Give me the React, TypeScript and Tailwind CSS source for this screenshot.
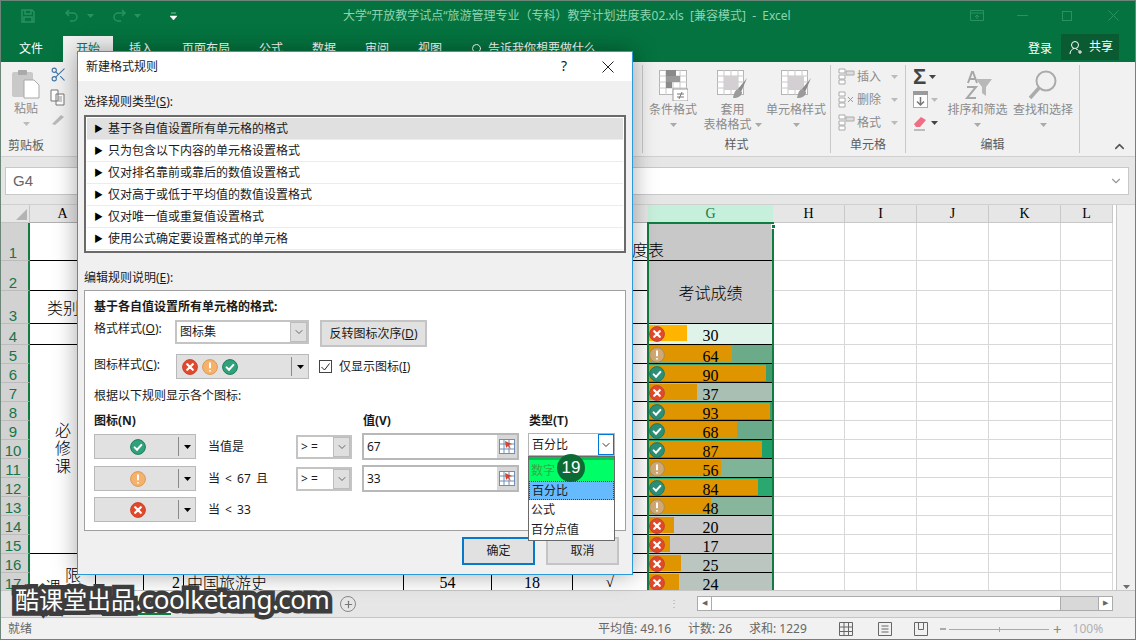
import React from "react";
import { Scissors, Search, ChevronUp, ChevronDown, Plus } from "lucide-react";

// status icons used in the dialog and in the G column
const StatusIcon = ({ kind, size = 16, dim = false }: { kind: "x" | "warn" | "ok"; size?: number; dim?: boolean }) => {
  const fill =
    kind === "x" ? "#e2492b" : kind === "warn" ? (dim ? "#cfa873" : "#f6b26b") : dim ? "#2c8f76" : "#2fa27c";
  const stroke = kind === "x" ? "#c9432a" : kind === "warn" ? (dim ? "#a88a5c" : "#d99a58") : "#1d7c60";
  return (
    <svg width={size} height={size} viewBox="0 0 16 16">
      <circle cx="8" cy="8" r="7.4" fill={fill} stroke={stroke} strokeWidth="1" />
      {kind === "x" && <path d="M5.2 5.2l5.6 5.6M10.8 5.2l-5.6 5.6" stroke="#fff" strokeWidth="2.2" strokeLinecap="round" />}
      {kind === "warn" && <path d="M8 3.6v5.6M8 11.2v1.2" stroke="#fff" strokeWidth="2" />}
      {kind === "ok" && <path d="M4.6 8.4l2.4 2.3 4.4-4.8" stroke="#fff" strokeWidth="2" fill="none" strokeLinecap="round" />}
    </svg>
  );
};

const Caret = ({ className = "" }: { className?: string }) => (
  <svg width="7" height="4" viewBox="0 0 7 4" className={className}>
    <path d="M0 0h7L3.5 4z" fill="currentColor" />
  </svg>
);

const RefIcon = () => (
  <svg width="16" height="15" viewBox="0 0 16 15">
    <rect x="0.5" y="0.5" width="15" height="14" fill="#fff" stroke="#6f8fb5" />
    <path d="M0 5h16M0 10h16M5 0v15M10 0v15" stroke="#6f8fb5" />
    <path d="M6 2l7 3-3 1 2 4-3-3-2 2z" fill="#d8442a" />
  </svg>
);

const ConditionIcon = () => (
  <svg width="29" height="31" viewBox="0 0 29 31">
    <rect x="0.5" y="0.5" width="27" height="24" fill="#fff" stroke="#b5b5b5" />
    <path d="M7 0v25M14 0v25M21 0v25M0 6h28M0 12h28M0 18h28" stroke="#c8c8c8" />
    <rect x="7" y="0" width="10" height="6" fill="#8a8a8a" />
    <rect x="7" y="6" width="14" height="6" fill="#9a9a9a" />
    <rect x="7" y="12" width="6" height="6" fill="#8a8a8a" />
    <rect x="14" y="19" width="15" height="12" fill="#fff" stroke="#9a9a9a" />
    <path d="M18 24h7M18 27h7M20 29l3-7" stroke="#777" />
  </svg>
);

const TableStyleIcon = ({ filled }: { filled?: boolean }) => (
  <svg width="31" height="30" viewBox="0 0 31 30">
    <rect x="0.5" y="0.5" width="26" height="24" fill="#fff" stroke="#b5b5b5" />
    <path d="M0 6h27M0 12h27M0 18h27M7 0v25M14 0v25M21 0v25" stroke="#c8c8c8" />
    <rect x="7" y="6" width={filled ? 16 : 14} height="14" fill="#d3cfd3" />
    <path d="M30 8l-9 11 3 3z" fill="#8b8b8b" />
    <path d="M21 19c-3 1-4 4-5 9 5 0 9-2 9-6z" fill="#9b9b9b" />
  </svg>
);

const GridSmall = ({ mark }: { mark?: boolean }) => (
  <svg width="17" height="17" viewBox="0 0 17 17">
    <path d="M1 1h6v4H1zM1 7h6v4H1zM1 12h6v4H1z" fill="#fff" stroke="#aaa" />
    {!mark && <path d="M8 3h8v4H8z" fill="#ddd" stroke="#aaa" />}
    {mark && <path d="M10 6l5 5M15 6l-5 5" stroke="#999" />}
  </svg>
);

const rows17 = [
  { n: 4, v: 30, k: "x", end: 688, bg: "bg-[#e0f3ea]", bar: "bg-[#ffb400]" },
  { n: 5, v: 64, k: "warn", end: 733, bg: "bg-[#6cab8a]", bar: "bg-[#df9500]" },
  { n: 6, v: 90, k: "ok", end: 767, bg: "bg-[#3e9c6e]", bar: "bg-[#df9500]" },
  { n: 7, v: 37, k: "x", end: 698, bg: "bg-[#a9bfb3]", bar: "bg-[#df9500]" },
  { n: 8, v: 93, k: "ok", end: 771, bg: "bg-[#3e9c6e]", bar: "bg-[#df9500]" },
  { n: 9, v: 68, k: "ok", end: 738, bg: "bg-[#6aa98a]", bar: "bg-[#df9500]" },
  { n: 10, v: 87, k: "ok", end: 763, bg: "bg-[#1f9f6b]", bar: "bg-[#df9500]" },
  { n: 11, v: 56, k: "warn", end: 722, bg: "bg-[#7fb498]", bar: "bg-[#df9500]" },
  { n: 12, v: 84, k: "ok", end: 759, bg: "bg-[#2ba870]", bar: "bg-[#df9500]" },
  { n: 13, v: 48, k: "warn", end: 712, bg: "bg-[#88b69d]", bar: "bg-[#df9500]" },
  { n: 14, v: 20, k: "x", end: 675, bg: "bg-[#c9c9c9]", bar: "bg-[#df9500]" },
  { n: 15, v: 17, k: "x", end: 671, bg: "bg-[#c9c9c9]", bar: "bg-[#df9500]" },
  { n: 16, v: 25, k: "x", end: 682, bg: "bg-[#bcc6c1]", bar: "bg-[#df9500]" },
  { n: 17, v: 24, k: "x", end: 680, bg: "bg-[#b8c4bd]", bar: "bg-[#df9500]" },
] as const;

const RowHead = ({ n }: { n: number }) => (
  <div className="flex items-end justify-center bg-[#d2d2d2] border-b border-[#bcbcbc] border-r-2 border-r-[#107c41] text-[#17754a] text-[15px] leading-[15px] pr-[2px] font-['Liberation_Sans',sans-serif]">
    {n}
  </div>
);

const Blank = ({ n = 7 }: { n?: number }) => (
  <>
    {Array.from({ length: n }).map((_, i) => (
      <div key={i} className="border-b border-r border-black bg-white" />
    ))}
  </>
);

const Free = () => (
  <>
    {[0, 1, 2, 3, 4].map((i) => (
      <div key={i} className="border-b border-r border-[#d8d8d8] bg-white" />
    ))}
  </>
);

const Sheet = () => {
  const heads = ["", "B", "C", "D", "E", "F", "", ""];
  return (
    <div className="relative grid h-[385px] shrink-0 overflow-hidden bg-white grid-cols-[30px_66px_48px_40px_220px_88px_81px_43px_32px_125px_72px_72px_72px_72px_52px_3px_20px] grid-rows-[18px_38px_30px_33px_21px_repeat(13,19px)] font-['Liberation_Serif','Noto_Sans_CJK_SC',serif] text-black">
      {/* header row */}
      <div className="relative bg-[#e6e6e6] border-b border-r border-[#c6c6c6]">
        <div className="absolute right-[2px] bottom-[2px] w-0 h-0 border-l-[11px] border-l-transparent border-b-[11px] border-b-[#b4b4b4]" />
      </div>
      <div className="flex items-center justify-center bg-[#e6e6e6] border-b border-[#b0b0b0] border-r border-r-[#d0d0d0] text-[14px]">A</div>
      {heads.slice(1).map((h, i) => (
        <div key={i} className="flex items-center justify-center bg-[#e6e6e6] border-b border-[#b0b0b0] text-[14px]">{h}</div>
      ))}
      <div className="flex items-center justify-center bg-[#c6efdc] border-b border-[#107c41] text-[#107c41] text-[14px]">G</div>
      {["H", "I", "J", "K", "L"].map((h) => (
        <div key={h} className="flex items-center justify-center bg-[#e6e6e6] border-b border-r border-[#c8c8c8] text-[14px]">{h}</div>
      ))}
      <div className="bg-white" />
      <div className="row-span-18 bg-[#f0f0f0] border-l border-[#c6c6c6] flex flex-col justify-end items-center pb-[3px] text-[#6d6d6d]">
        <Caret />
      </div>

      {/* rows 1 - 3 */}
      <RowHead n={1} />
      <div className="col-span-8 border-b border-black bg-white" />
      <div className="relative bg-[#c8c8c8] border-b border-black">
        <span className="absolute left-[-16px] top-[15px] text-[16px] leading-[22px] whitespace-nowrap font-['Noto_Sans_CJK_SC',sans-serif] font-light">度表</span>
      </div>
      <Free />
      <div className="bg-white" />

      <RowHead n={2} />
      <div className="border-b border-black bg-white" />
      <Blank />
      <div className="row-span-2 flex items-center justify-center bg-[#c8c8c8] border-b border-black text-[16px] font-['Noto_Sans_CJK_SC',sans-serif] font-light">考试成绩</div>
      <Free />
      <div className="bg-white" />

      <RowHead n={3} />
      <div className="flex items-center justify-center border-b border-black bg-white text-[16px] font-['Noto_Sans_CJK_SC',sans-serif] font-light">类别</div>
      <Blank />
      <Free />
      <div className="bg-white" />

      {/* data rows */}
      {rows17.map((r) => (
        <React.Fragment key={r.n}>
          <RowHead n={r.n} />
          {r.n === 4 && <div className="border-b border-black bg-white" />}
          {r.n === 5 && (
            <div className="row-span-11 flex flex-col items-center justify-center border-b border-black bg-white text-[16px] leading-[18px] pb-[4px] font-['Noto_Sans_CJK_SC',sans-serif] font-light">
              <span>必</span>
              <span>修</span>
              <span>课</span>
            </div>
          )}
          {r.n === 16 && (
            <div className="relative row-span-2 border-r border-black bg-white text-[16px] font-['Noto_Sans_CJK_SC',sans-serif] font-light">
              <span className="absolute left-[35px] top-[8px]">限</span>
              <span className="absolute left-[15px] top-[20px]">课</span>
            </div>
          )}
          {r.n === 17 ? (
            <>
              <div className="border-r border-black bg-white" />
              <div className="border-r border-black bg-white text-right pr-[3px] text-[16px] leading-[19px]">2</div>
              <div className="border-r border-black bg-white pl-[3px] text-[16px] leading-[19px] font-['Noto_Sans_CJK_SC',sans-serif] font-light">中国旅游史</div>
              <div className="border-r border-black bg-white text-center text-[16px] leading-[19px]">54</div>
              <div className="border-r border-black bg-white text-center text-[16px] leading-[19px]">18</div>
              <div className="bg-white text-right pr-[2px] text-[15px] leading-[19px]">√</div>
              <div className="bg-white" />
            </>
          ) : (
            <Blank />
          )}
          <div className={`relative border-b border-black overflow-hidden ${r.bg}`}>
            <div className={`mt-[1px] h-[16px] ${r.bar}`} style={{ width: r.end - 649 }} />
            <div className="absolute left-[1px] top-[2px]">
              <StatusIcon kind={r.k} dim />
            </div>
            <span className="absolute inset-x-0 top-[2px] text-center text-[16px] leading-[19px] tabular-nums">{r.v}</span>
          </div>
          <Free />
          <div className="bg-white" />
        </React.Fragment>
      ))}

      {/* selection frame */}
      <div className="pointer-events-none absolute z-10 left-[647px] top-[17px] w-[127px] h-[370px] border-2 border-[#107c41]">
        <div className="absolute -right-[4px] top-0 w-[5px] h-[5px] bg-[#107c41] border border-white" />
      </div>
    </div>
  );
};

const Group = ({ label, className, children }: { label: string; className: string; children?: React.ReactNode }) => (
  <div className={`relative flex flex-col shrink-0 border-r border-[#c8c8c8] my-[3px] ${className}`}>
    <div className="flex flex-1">{children}</div>
    <div className="text-center text-xs leading-[16px] h-[16px] text-[#5c5c5c]">{label}</div>
  </div>
);

const BigButton = ({ w, icon, lines }: { w: string; icon: React.ReactNode; lines: string[] }) => (
  <div className={`flex flex-col items-center text-xs text-[#8b8b8b] ${w}`}>
    <div className="h-[31px] mt-[5px] flex items-start justify-center">{icon}</div>
    <div className="mt-[1px] leading-[15px] text-center whitespace-nowrap">{lines[0]}</div>
    {lines[1] ? (
      <div className="leading-[15px] whitespace-nowrap flex items-center gap-[3px]">
        {lines[1]}
        <Caret className="text-[#aaa]" />
      </div>
    ) : (
      <Caret className="mt-[6px] text-[#aaa]" />
    )}
  </div>
);

const CellRow = ({ label, icon }: { label: string; icon: React.ReactNode }) => (
  <div className="flex items-center h-[23px] text-xs text-[#8b8b8b]">
    <span className="w-[19px]">{icon}</span>
    <span>{label}</span>
    <Caret className="ml-[10px] text-[#bbb]" />
  </div>
);

const Ribbon = () => (
  <div className="flex h-[95px] bg-[#f1f1f1] border-b border-[#d0d0d0] shrink-0">
    {/* clipboard */}
    <div className="flex w-[77px] shrink-0">
      <div className="flex flex-col w-[50px] items-center text-xs text-[#8b8b8b] pt-[7px] pl-[2px]">
        <svg width="30" height="30" viewBox="0 0 30 30">
          <rect x="1" y="3" width="21" height="25" rx="2" fill="#c9c9c9" />
          <rect x="7" y="1" width="9" height="5" rx="1" fill="#aaa" />
          <path d="M13 11h10l5 5v13H13z" fill="#fff" stroke="#a8a8a8" />
        </svg>
        <span className="mt-[2px] leading-[15px]">粘贴</span>
        <Caret className="mt-[6px] text-[#bbb]" />
        <span className="mt-[12px] text-[#5c5c5c] leading-[16px]">剪贴板</span>
      </div>
      <div className="flex flex-col items-start pt-[4px] gap-[6px]">
        <Scissors size={17} className="text-[#3f77a8]" strokeWidth={1.5} />
        <svg width="16" height="17" viewBox="0 0 16 17">
          <path d="M1 1h7v11H1zM6 5h8v11H6z" fill="#fff" stroke="#777" />
          <path d="M8 8h4M8 10h4M8 12h4" stroke="#999" />
        </svg>
        <svg width="16" height="14" viewBox="0 0 16 14">
          <path d="M2 12l9-9 3 2-9 8z" fill="#b9b9b9" />
        </svg>
      </div>
    </div>
    <div className="w-[566px] shrink-0 border-r border-[#c8c8c8] my-[3px]" />
    <Group label="样式" className="w-[188px]">
      <BigButton w="w-[60px]" icon={<ConditionIcon />} lines={["条件格式"]} />
      <BigButton w="w-[59px]" icon={<TableStyleIcon />} lines={["套用", "表格格式"]} />
      <BigButton w="w-[68px]" icon={<TableStyleIcon filled />} lines={["单元格样式"]} />
    </Group>
    <Group label="单元格" className="w-[75px]">
      <div className="flex flex-col pl-[7px]">
        <CellRow label="插入" icon={<GridSmall />} />
        <CellRow label="删除" icon={<GridSmall mark />} />
        <CellRow label="格式" icon={<GridSmall />} />
      </div>
    </Group>
    <Group label="编辑" className="w-[174px]">
      <div className="flex flex-col w-[39px] pl-[7px] text-[#444]">
        <div className="flex items-center h-[23px] gap-[3px]">
          <span className="text-[22px] leading-[22px] font-bold font-['Liberation_Sans',sans-serif]">Σ</span>
          <Caret />
        </div>
        <div className="flex items-center h-[23px] gap-[3px]">
          <svg width="15" height="17" viewBox="0 0 15 17">
            <rect x="0.5" y="0.5" width="14" height="16" fill="#fff" stroke="#aaa" />
            <rect x="0" y="0" width="15" height="4" fill="#9a9a9a" />
            <path d="M7.5 6v8M4 10.500l3.500 3.500 3.500-3.500" stroke="#777" fill="none" strokeWidth="1.500" />
          </svg>
          <Caret className="text-[#bbb]" />
        </div>
        <div className="flex items-center h-[23px] gap-[3px]">
          <svg width="15" height="16" viewBox="0 0 15 16">
            <path d="M1 9l7-7 5 3-6 7H3z" fill="#f06d84" />
            <path d="M1 15h11" stroke="#888" />
          </svg>
          <Caret />
        </div>
      </div>
      <BigButton
        w="w-[65px]"
        icon={
          <svg width="30" height="30" viewBox="0 0 30 30">
            <path d="M5 13l4-11h1l4 11M6.500 9h6" stroke="#a8a8a8" fill="none" strokeWidth="2" />
            <path d="M4 17h9l-9 11h9" stroke="#a8a8a8" fill="none" strokeWidth="2" />
            <path d="M13 9h16l-6 8v9l-4-3v-6z" fill="#b8b8b8" />
          </svg>
        }
        lines={["排序和筛选"]}
      />
      <BigButton
        w="w-[66px]"
        icon={
          <svg width="30" height="30" viewBox="0 0 30 30">
            <circle cx="18" cy="11" r="9.500" fill="none" stroke="#ababab" strokeWidth="2" />
            <path d="M11 18L2 28" stroke="#ababab" strokeWidth="3.500" />
          </svg>
        }
        lines={["查找和选择"]}
      />
    </Group>
    <div className="flex-1 flex items-end justify-end pr-[9px] pb-[2px] text-[#555]">
      <ChevronUp size={15} strokeWidth={2.5} />
    </div>
  </div>
);

const Select = ({ value, w, h }: { value: string; w: string; h: string }) => (
  <div className={`flex items-center bg-white border-2 border-[#c4c4c4] pl-[3px] ${w} ${h}`}>
    <span className="flex-1">{value}</span>
    <span className="flex items-center justify-center w-[17px] h-full bg-[#dfdfdf] border border-[#bdbdbd] text-[#666]">
      <ChevronDown size={12} />
    </span>
  </div>
);

const RuleRow = ({
  kind,
  text,
  op,
  val,
  h,
  children,
}: {
  kind: "x" | "warn" | "ok";
  text: string;
  op?: boolean;
  val?: string;
  h: string;
  children?: React.ReactNode;
}) => (
  <div className={`flex items-center ${h}`}>
    <div className="flex items-center w-[102px] h-[25px] bg-[#e1e1e1] border border-[#b9b9b9]">
      <span className="w-[83px] flex justify-center pl-[3px]">
        <StatusIcon kind={kind} />
      </span>
      <span className="h-[19px] border-l border-[#8a8a8a]" />
      <Caret className="ml-[5px] text-black" />
    </div>
    <span className="w-[100px] pl-[12px] whitespace-pre [word-spacing:2px]">{text}</span>
    {op && <Select value="> =" w="w-[56px]" h="h-[24px]" />}
    {val && (
      <div className="flex items-center ml-[10px] w-[157px] h-[27px] bg-white border-2 border-[#b8b8b8] pl-[3px]">
        <span className="flex-1">{val}</span>
        <span className="flex items-center justify-center w-[20px] h-full bg-[#d8d8d8]">
          <RefIcon />
        </span>
      </div>
    )}
    {children}
  </div>
);

const TypeSelect = () => (
  <div className="relative ml-[9px] mb-[4px] w-[87px] h-[23px] flex items-center bg-white border border-[#b4b4b4] pl-[3px]">
    <span className="flex-1">百分比</span>
    <span className="flex items-center justify-center w-[16px] h-[21px] border border-[#0078d7] text-[#333]">
      <ChevronDown size={12} />
    </span>
    <div className="absolute left-[-1px] top-[22px] w-[87px] h-[85px] bg-white border border-[#6a6a6a] z-10 flex flex-col">
      <div className="h-[24px] pl-[2px] bg-[#00ff66] border-t-[3px] border-t-[#00c650] text-[#35a845] leading-[22px]">数字</div>
      <div className="h-[19px] pl-[2px] bg-[#66bbff] border border-dotted border-[#444] leading-[17px]">百分比</div>
      <div className="h-[20px] pl-[2px] leading-[20px]">公式</div>
      <div className="h-[20px] pl-[2px] leading-[20px]">百分点值</div>
      <div className="absolute left-[28px] top-[-3px] w-[28px] h-[28px] rounded-full bg-[#0c6b34] flex items-center justify-center text-white text-[17px] font-['Liberation_Sans',sans-serif]">
        19
      </div>
    </div>
  </div>
);

const Dialog = () => (
  <div className="absolute left-[77px] top-[51px] z-30 w-[556px] h-[524px] bg-[#f0f0f0] border border-[#2a9ad8] shadow-[0_0_22px_rgba(0,0,0,0.35)] text-xs text-[#1a1a1a] flex flex-col">
    <div className="flex items-center h-[29px] bg-white shrink-0 pl-[8px]">
      <span className="flex-1">新建格式规则</span>
      <span className="text-[14px] mr-[35px] font-['Noto_Sans',sans-serif]">?</span>
      <svg width="12" height="12" viewBox="0 0 12 12" className="mr-[18px]">
        <path d="M0.5 0.5l11 11M11.500 0.500l-11 11" stroke="#222" />
      </svg>
    </div>
    <div className="flex flex-col px-[6px]">
      <div className="mt-[13px] leading-[16px]">
        选择规则类型(<span className="underline">S</span>):
      </div>
      <div className="mt-[5px] h-[138px] border-2 border-[#6a6a6a] bg-white p-[1px]">
        {[
          "基于各自值设置所有单元格的格式",
          "只为包含以下内容的单元格设置格式",
          "仅对排名靠前或靠后的数值设置格式",
          "仅对高于或低于平均值的数值设置格式",
          "仅对唯一值或重复值设置格式",
          "使用公式确定要设置格式的单元格",
        ].map((t, i) => (
          <div
            key={t}
            className={`flex items-center h-[22px] pl-[7px] pt-[1px] border-b border-[#ececec] ${i === 0 ? "bg-[#e0e0e0]" : ""}`}
          >
            <span className="w-[14px] text-[9px] text-black">▶</span>
            {t}
          </div>
        ))}
      </div>
      <div className="mt-[17px] leading-[16px]">
        编辑规则说明(<span className="underline">E</span>):
      </div>
      <div className="mt-[4px] h-[241px] border border-[#a0a0a0] bg-white px-[9px] flex flex-col">
        <div className="mt-[8px] leading-[16px] font-bold">基于各自值设置所有单元格的格式:</div>
        <div className="mt-[5px] flex h-[27px]">
          <span className="w-[81px] pt-[1px]">
            格式样式(<span className="underline">O</span>):
          </span>
          <Select value="图标集" w="w-[134px]" h="h-[24px]" />
          <div className="ml-[11px] w-[107px] h-[27px] flex items-center justify-center bg-[#e1e1e1] border-2 border-[#c4c4c4]">
            反转图标次序(<span className="underline">D</span>)
          </div>
        </div>
        <div className="mt-[7px] flex items-center h-[25px]">
          <span className="w-[82px] pb-[4px]">
            图标样式(<span className="underline">C</span>):
          </span>
          <div className="flex items-center w-[133px] h-[25px] bg-[#e1e1e1] border border-[#b9b9b9]">
            <span className="flex gap-[4px] pl-[5px] w-[114px]">
              <StatusIcon kind="x" />
              <StatusIcon kind="warn" />
              <StatusIcon kind="ok" />
            </span>
            <span className="h-[19px] border-l border-[#8a8a8a]" />
            <Caret className="ml-[5px] text-black" />
          </div>
          <div className="ml-[10px] w-[13px] h-[13px] border border-[#444] flex items-center justify-center">
            <svg width="9" height="8" viewBox="0 0 9 8">
              <path d="M0.500 4l3 3 5-6.500" stroke="#222" fill="none" />
            </svg>
          </div>
          <span className="ml-[7px]">
            仅显示图标(<span className="underline">I</span>)
          </span>
        </div>
        <div className="mt-[9px] leading-[16px]">根据以下规则显示各个图标:</div>
        <div className="mt-[9px] flex font-bold leading-[16px]">
          <span className="w-[269px]">图标(N)</span>
          <span className="w-[166px]">值(V)</span>
          <span>类型(T)</span>
        </div>
        <div className="mt-[4px] flex flex-col gap-[5px]">
          <RuleRow kind="ok" text="当值是" op val="67" h="h-[27px]">
            <TypeSelect />
          </RuleRow>
          <RuleRow kind="warn" text="当 < 67 且" op val="33" h="h-[27px]" />
          <RuleRow kind="x" text="当 < 33" h="h-[25px]" />
        </div>
      </div>
      <div className="mt-[6px] flex justify-end gap-[11px] pr-[7px]">
        <div className="w-[73px] h-[28px] flex items-center justify-center bg-[#e1e1e1] border-2 border-[#0a78c8]">确定</div>
        <div className="w-[73px] h-[28px] flex items-center justify-center bg-[#e1e1e1] border-2 border-[#c4c4c4]">取消</div>
      </div>
    </div>
  </div>
);

export default function App() {
  return (
    <div className="relative w-[1136px] h-[640px] overflow-hidden flex flex-col font-['Noto_Sans','Noto_Sans_CJK_SC',sans-serif] bg-[#e6e6e6]">
      {/* title bar */}
      <div className="flex h-[31px] shrink-0 bg-[#04733f] items-center text-[#2a9162]">
        <div className="flex items-center w-[343px] shrink-0">
          <svg width="14" height="14" viewBox="0 0 14 14" className="ml-[21px]">
            <path d="M1 1h10l2 2v10H1zM4 1v4h6V1M3 13V8h8v5" fill="none" stroke="currentColor" strokeWidth="1.500" />
          </svg>
          <svg width="14" height="14" viewBox="0 0 14 14" className="ml-[30px]">
            <path d="M4 1L1 4l3 3M1 4h7a4 4 0 010 8H5" fill="none" stroke="currentColor" strokeWidth="1.500" />
          </svg>
          <Caret className="ml-[8px]" />
          <svg width="14" height="14" viewBox="0 0 14 14" className="ml-[18px]">
            <path d="M10 1l3 3-3 3M13 4H6a4 4 0 000 8h3" fill="none" stroke="currentColor" strokeWidth="1.500" />
          </svg>
          <Caret className="ml-[8px]" />
          <svg width="7" height="8" viewBox="0 0 7 8" className="ml-[29px] text-white">
            <path d="M1 1h5M0 4h7L3.500 8z" fill="currentColor" stroke="currentColor" strokeWidth="0.500" />
          </svg>
        </div>
        <span className="text-xs whitespace-pre text-[#8fd3b0]">大学“开放教学试点“旅游管理专业（专科）教学计划进度表02.xls  [兼容模式]  -  Excel</span>
        <div className="ml-auto flex items-center pr-[17px]">
          <svg width="14" height="11" viewBox="0 0 14 11">
            <path d="M0.500 0.500h13v10h-13zM0.500 3h13M7 9V5M5 7l2-2 2 2" fill="none" stroke="currentColor" />
          </svg>
          <span className="ml-[33px] w-[11px] border-t border-current" />
          <span className="ml-[34px] w-[10px] h-[10px] border border-current" />
          <svg width="11" height="11" viewBox="0 0 11 11" className="ml-[36px]">
            <path d="M0.500 0.500l10 10M10.500 0.500l-10 10" stroke="currentColor" />
          </svg>
        </div>
      </div>
      {/* tabs */}
      <div className="flex h-[31px] shrink-0 bg-[#04733f] text-xs text-white items-end">
        <span className="w-[63px] h-[26px] pl-[19px] leading-[26px]">文件</span>
        <span className="w-[50px] h-[26px] bg-[#f1f1f1] text-[#107c41] text-center leading-[26px]">开始</span>
        <span className="ml-[16px] w-[53px] h-[26px] leading-[26px]">插入</span>
        <span className="w-[77px] h-[26px] leading-[26px]">页面布局</span>
        <span className="w-[53px] h-[26px] leading-[26px]">公式</span>
        <span className="w-[53px] h-[26px] leading-[26px]">数据</span>
        <span className="w-[53px] h-[26px] leading-[26px]">审阅</span>
        <span className="w-[53px] h-[26px] leading-[26px]">视图</span>
        <span className="flex items-center h-[26px] gap-[5px]">
          <Search size={12} />
          告诉我你想要做什么
        </span>
        <span className="ml-auto h-[26px] leading-[26px] mr-[9px]">登录</span>
        <span className="flex items-center gap-[5px] w-[58px] h-[26px] mb-[2px] mr-[17px] pl-[8px] bg-[#0a5a32]">
          <svg width="15" height="15" viewBox="0 0 15 15">
            <circle cx="6" cy="5" r="3.500" fill="none" stroke="#fff" />
            <path d="M1 14c0-3 2-5 4-5.500M7 9c1 .2 2 .8 2.500 1.500M11 10v4M9 12h4" stroke="#fff" fill="none" />
          </svg>
          共享
        </span>
      </div>
      <Ribbon />
      {/* formula bar */}
      <div className="h-[48px] shrink-0 bg-[#e6e6e6] pt-[10px] px-[5px] pr-[7px] border-b border-[#d0d0d0]">
        <div className="flex items-center justify-between h-[28px] bg-white border border-[#c8c8c8] pl-[7px] pr-[5px] text-[#666]">
          <span className="text-[15px] font-['Liberation_Sans',sans-serif]">G4</span>
          <ChevronDown size={14} className="text-[#999]" />
        </div>
      </div>
      <Sheet />
      {/* sheet tabs */}
      <div className="flex items-center h-[27px] shrink-0 bg-[#e6e6e6] border-t border-[#c6c6c6] text-xs text-[#555] font-['Liberation_Sans',sans-serif]">
        <div className="ml-[101px] w-[70px] h-[24px] self-start bg-white border-b-2 border-[#107c41] text-center text-[#107c41] font-bold leading-[22px]">Sheet1</div>
        <div className="w-[70px] text-center">Sheet2</div>
        <div className="w-[70px] text-center">Sheet3</div>
        <div className="ml-[29px] w-[16px] h-[16px] rounded-full border border-[#888] flex items-center justify-center text-[#777]">
          <Plus size={11} strokeWidth={2.5} />
        </div>
        <span className="ml-[313px] text-[#aaa] text-[10px] leading-[4px] w-[8px] text-center">⋮</span>
        <div className="ml-[20px] flex h-[15px] w-[416px] bg-[#d8d8d8] border border-[#ababab] mb-[2px]">
          <span className="w-[14px] border-r border-[#ababab] bg-white flex items-center justify-center text-[#666] text-[7px]">◀</span>
          <span className="w-[349px] bg-white border-r border-[#ababab]" />
          <span className="flex-1" />
          <span className="w-[14px] border-l border-[#ababab] bg-white flex items-center justify-center text-[#666] text-[7px]">▶</span>
        </div>
      </div>
      {/* status bar */}
      <div className="flex items-center flex-1 bg-[#f1f1f1] border-t border-[#c6c6c6] text-xs text-[#666]">
        <span className="ml-[8px] w-[590px]">就绪</span>
        <span className="w-[90px]">平均值: 49.16</span>
        <span className="w-[61px]">计数: 26</span>
        <span className="w-[90px]">求和: 1229</span>
        <svg width="14" height="14" viewBox="0 0 14 14">
          <path d="M0.500 0.500h13v13h-13zM0.500 5h13M0.500 9.500h13M5 0.500v13M9.500 0.500v13" fill="none" stroke="#666" />
        </svg>
        <svg width="14" height="14" viewBox="0 0 14 14" className="ml-[25px]">
          <path d="M0.500 0.500h13v13h-13zM3.500 4h7M3.500 7h7M3.500 10h7" fill="none" stroke="#666" />
        </svg>
        <svg width="14" height="14" viewBox="0 0 14 14" className="ml-[22px]">
          <path d="M0.500 0.500h13v13h-13zM4.500 0.500v7h5v-7" fill="none" stroke="#666" />
        </svg>
        <span className="ml-[12px] w-[6px] border-t-2 border-[#aaa]" />
        <span className="relative ml-[3px] w-[100px] border-t border-[#aaa]">
          <span className="absolute left-1/2 -top-[3px] h-[5px] border-l border-[#aaa]" />
        </span>
        <span className="ml-[4px] text-[#888] text-[15px] leading-none">+</span>
        <span className="ml-[11px] text-[#b0b0b0]">100%</span>
      </div>

      <Dialog />

      {/* watermark sits over everything */}
      <div className="absolute left-[15px] top-[582px] z-40 text-white whitespace-nowrap text-[24px] leading-[34px] font-['Noto_Sans_CJK_SC',sans-serif] [paint-order:stroke] [-webkit-text-stroke:9px_#3d3d3d]">
        酷课堂出品.<span className="text-[26px] tracking-[-0.5px] font-['Noto_Sans',sans-serif]">coolketang.com</span>
      </div>
      <div className="pointer-events-none absolute inset-0 z-50 border border-[#6b8578]" />
    </div>
  );
}
